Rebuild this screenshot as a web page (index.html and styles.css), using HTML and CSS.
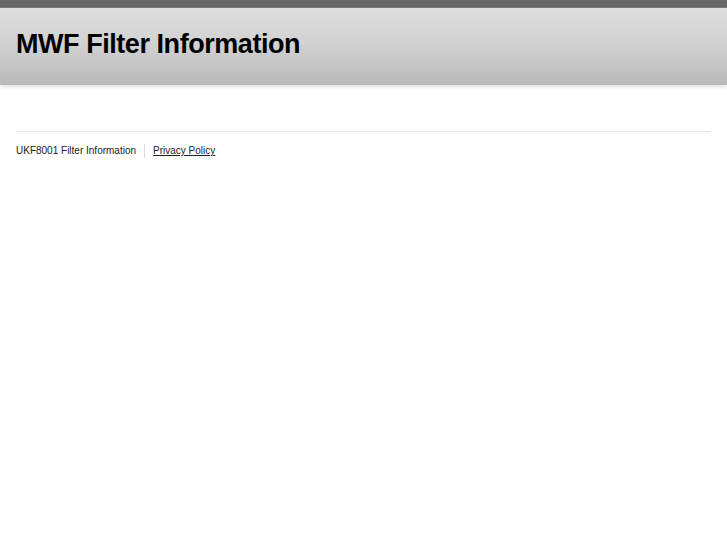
FILE: index.html
```html
<!DOCTYPE html>
<html lang="en">
<head>
    <meta charset="UTF-8">
    <title>MWF Filter Information</title>
    <link rel="stylesheet" href="styles.css">
</head>
<body>
    <div class="topbar"></div>
    <div class="header">
        <h1>MWF Filter Information</h1>
    </div>

    <div class="footer">
        <span class="site-name">UKF8001 Filter Information</span>
        <a href="#">Privacy Policy</a>
    </div>
</body>
</html>
```

FILE: styles.css
```css
body {
    font-family: "Liberation Sans", Arial, sans-serif;
    margin: 0;
    padding: 0;
    background: #fff;
    color: #222;
}

.topbar {
    height: 7px;
    background: #666;
    border-bottom: 1px solid #7a7a7a;
}

.header {
    height: 72px;
    padding: 0 16px 5px;
    display: flex;
    align-items: center;
    background: linear-gradient(to bottom, #dedede 0%, #d2d2d2 45%, #b9b9b9 100%);
    box-shadow: 0 2px 4px rgba(0, 0, 0, 0.12);
}

h1 {
    margin: 0;
    font-size: 27px;
    font-weight: bold;
    color: #000;
    letter-spacing: -0.45px;
}

.footer {
    margin: 46px 16px 0;
    padding-top: 12px;
    border-top: 1px solid #e4e4e4;
    display: flex;
    align-items: center;
    font-size: 10px;
    line-height: 14px;
    color: #222;
}

.site-name {
    padding-right: 8px;
    border-right: 1px solid #ddd;
}

.footer a {
    margin-left: 8px;
    color: #222;
}
```
